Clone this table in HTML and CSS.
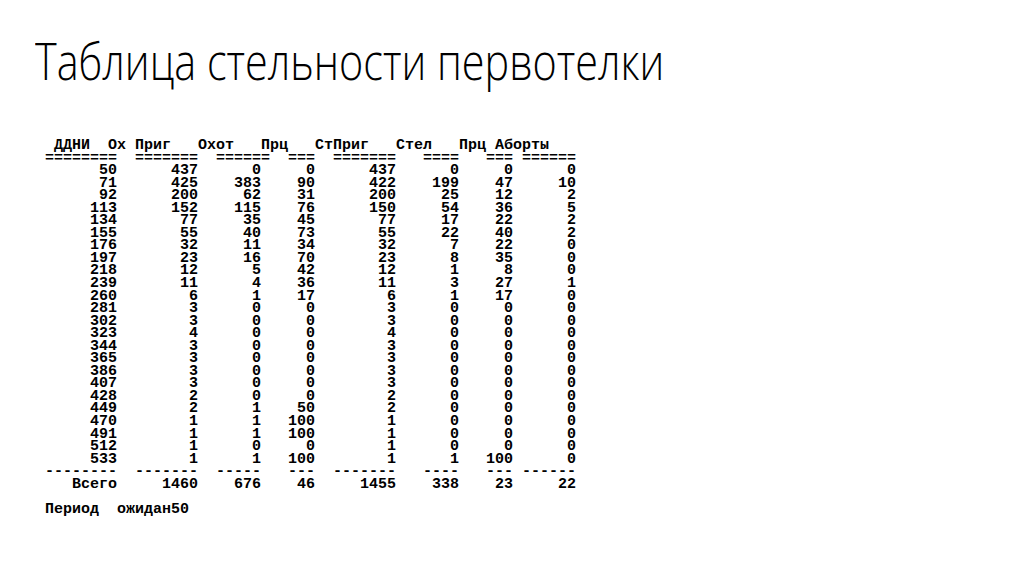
FILE: index.html
```html
<!DOCTYPE html>
<html lang="ru">
<head>
<meta charset="utf-8">
<title>Таблица стельности первотелки</title>
<link rel="stylesheet" href="styles.css">
</head>
<body>
<div class="slide">
<h1 class="title"><span class="title-text">Таблица стельности первотелки</span></h1>
<pre class="report"> ДДНИ  Ох Приг   Охот   Прц   СтПриг   Стел   Прц Аборты
========  =======  ======  ===  =======   ====   === ======
      50      437      0     0      437      0     0      0
      71      425    383    90      422    199    47     10
      92      200     62    31      200     25    12      2
     113      152    115    76      150     54    36      5
     134       77     35    45       77     17    22      2
     155       55     40    73       55     22    40      2
     176       32     11    34       32      7    22      0
     197       23     16    70       23      8    35      0
     218       12      5    42       12      1     8      0
     239       11      4    36       11      3    27      1
     260        6      1    17        6      1    17      0
     281        3      0     0        3      0     0      0
     302        3      0     0        3      0     0      0
     323        4      0     0        4      0     0      0
     344        3      0     0        3      0     0      0
     365        3      0     0        3      0     0      0
     386        3      0     0        3      0     0      0
     407        3      0     0        3      0     0      0
     428        2      0     0        2      0     0      0
     449        2      1    50        2      0     0      0
     470        1      1   100        1      0     0      0
     491        1      1   100        1      0     0      0
     512        1      0     0        1      0     0      0
     533        1      1   100        1      1   100      0
--------  -------  -----   ---  -------   ----   --- ------
   Всего     1460    676    46     1455    338    23     22

Период  ожидан50</pre>
</div>
</body>
</html>
```
FILE: styles.css
```css
html, body {
  margin: 0;
  padding: 0;
  background: #ffffff;
}

.slide {
  width: 1024px;
  height: 574px;
  overflow: hidden;
  background: #ffffff;
  color: #000000;
}

.title {
  margin: 0;
  padding: 30px 0 0 35px;
  height: 60px;
  font-family: "Open Sans", "Noto Sans", sans-serif;
  font-weight: 300;
  font-size: 52px;
  line-height: 60px;
  letter-spacing: 0;
  white-space: nowrap;
  color: #000000;
}

.title-text {
  display: inline-block;
  transform: scaleX(0.795);
  transform-origin: 0 50%;
}

.report {
  margin: 50px 0 0 45px;
  font-family: "Liberation Mono", "Courier New", monospace;
  font-weight: 700;
  font-size: 15px;
  line-height: 12.55px;
  color: #000000;
}
```
